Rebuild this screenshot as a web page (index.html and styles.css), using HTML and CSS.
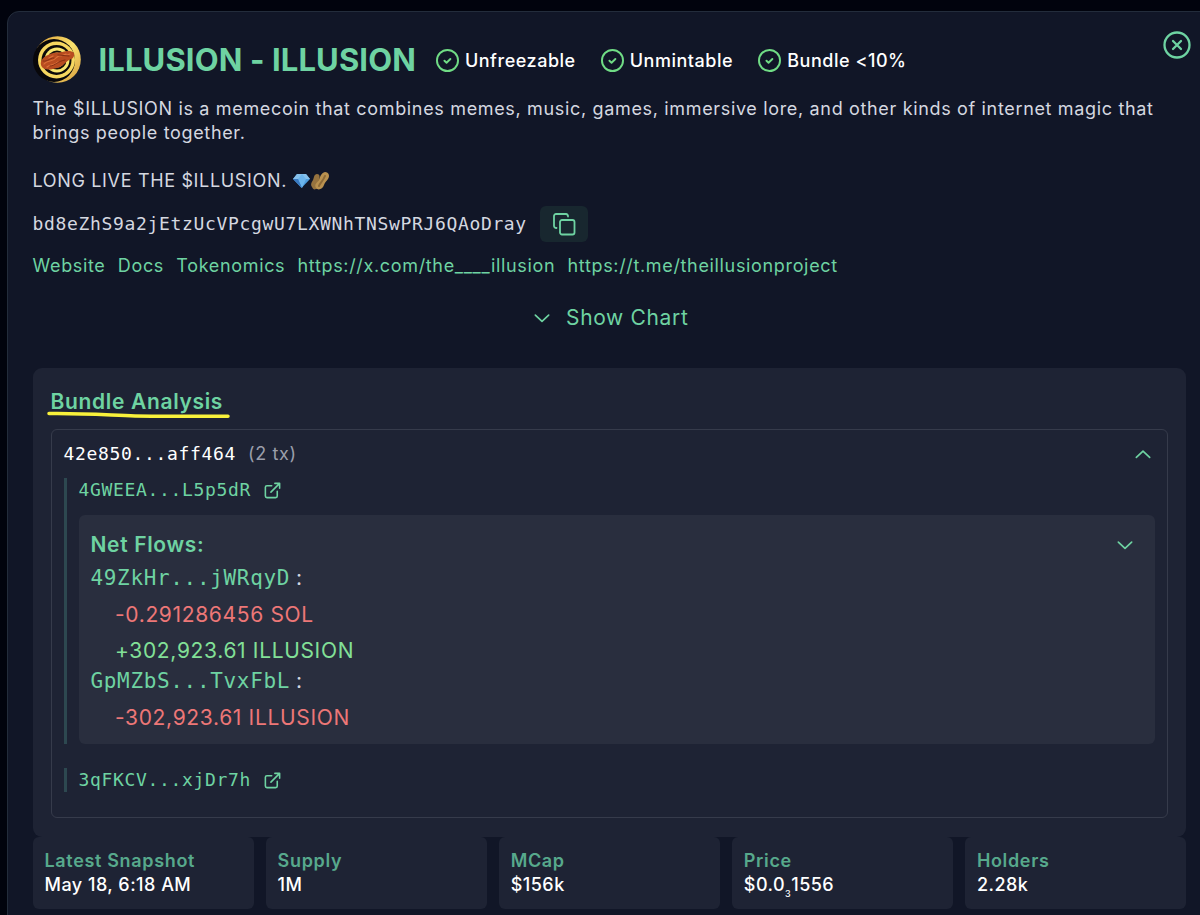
FILE: index.html
```
<!DOCTYPE html>
<html lang="en">

<head>
  <meta charset="UTF-8">
  <meta name="viewport" content="width=device-width, initial-scale=1.0">
  <title>ILLUSION</title>
  <link rel="stylesheet" href="styles.css">
</head>

<body>
  <!-- shared icons -->
  <svg class="sprite">
    <symbol id="check" viewBox="0 0 24 24">
      <circle cx="12" cy="12" r="11"/>
      <path d="M8.8 12.2l2.2 2.1 4-3.9"/>
    </symbol>
    <symbol id="down" viewBox="0 0 24 24"><path d="M4 8.5l8 7.5 8-7.5"/></symbol>
    <symbol id="up" viewBox="0 0 24 24"><path d="M4 16l8-7.5 8 7.5"/></symbol>
    <symbol id="external" viewBox="0 0 24 24">
      <path d="M18 13v6a2 2 0 0 1-2 2H5a2 2 0 0 1-2-2V8a2 2 0 0 1 2-2h6M15 3h6v6M10 14L21 3"/>
    </symbol>
  </svg>

  <div class="modal">
    <button class="close" aria-label="Close">
      <svg viewBox="0 0 28 28"><circle cx="14" cy="14" r="12.5"/><path d="M10 10l8 8M18 10l-8 8"/></svg>
    </button>

    <header class="token">
      <svg class="avatar" viewBox="0 0 48 48">
        <defs>
          <linearGradient id="gold" x1="0" y1="0" x2="1" y2="1">
            <stop offset="0" stop-color="#d99a35"/>
            <stop offset=".5" stop-color="#fbe36d"/>
            <stop offset="1" stop-color="#d59a3c"/>
          </linearGradient>
        </defs>
        <circle cx="24.5" cy="23.5" r="23.3" fill="url(#gold)"/>
        <ellipse cx="21" cy="24.5" rx="21" ry="21.5" fill="#08070a"/>
        <circle cx="23.5" cy="24" r="18.5" fill="#f6d75f"/>
        <circle cx="23.5" cy="24" r="15" fill="#0b090a"/>
        <circle cx="24" cy="24" r="12.5" fill="#f8e66f"/>
        <circle cx="24" cy="24" r="9.5" fill="#14100b"/>
        <circle cx="24" cy="24" r="7.5" fill="#f8e66f"/>
        <path d="M8 29c-1-4 2-8 7-10 5-3 9-2 14-3 4-1 9-2 12 1 1 3-1 6-5 7-4 2-6 7-12 8-6 2-14 3-16-3z" fill="#b84c20"/>
        <path d="M11 28c4-5 8-1 12-6s8-1 14-4M14 31c3-3 7-1 11-5M16 22l4-2M28 20l5-2" fill="none" stroke="#dc7038" stroke-width="1.2"/>
        <path d="M10 25c5 1 6-3 11-3M17 30c5 0 8-5 15-6M25 19l11 1" fill="none" stroke="#842f14" stroke-width="1"/>
      </svg>
      <h1>ILLUSION - ILLUSION</h1>
      <ul class="checks">
        <li><svg><use href="#check"/></svg>Unfreezable</li>
        <li><svg><use href="#check"/></svg>Unmintable</li>
        <li><svg><use href="#check"/></svg>Bundle &lt;10%</li>
      </ul>
    </header>

    <div class="description">
      <p>The $ILLUSION is a memecoin that combines memes, music, games, immersive lore, and other kinds of internet magic that<br>brings people together.</p>
      <p>LONG LIVE THE $ILLUSION.
        <svg class="emoji" viewBox="0 0 38 20">
          <path d="M5 3h9l4 5-8.500 9L1 8z" fill="#4e9ddd"/>
          <path d="M5 3h9l4 5H1z" fill="#86c0ea"/>
          <path d="M6 8l4-5 4 5-4 9z" fill="#6bb4eb"/>
          <path d="M1 8h5l4 9z" fill="#3979c1"/>
          <path d="M20 16c-2-3 0-5 1-7s1-6 4-6 3 3 2 6 0 8-3 9c-2 1-3 0-4-2z" fill="#96733f"/>
          <path d="M24 17c-2-4 1-5 3-8 1-3 2-7 6-8 4 0 5 4 3 7s-3 3-4 6c-1 4-6 6-8 3z" fill="#b9914f"/>
          <path d="M27 15c1-3 4-5 6-10" fill="none" stroke="#8d6a37"/>
        </svg>
      </p>
    </div>

    <div class="address">
      <span class="mono">bd8eZhS9a2jEtzUcVPcgwU7LXWNhTNSwPRJ6QAoDray</span>
      <button class="copy" aria-label="Copy">
        <svg viewBox="0 0 24 24"><rect x="8" y="8" width="14.500" height="14.500" rx="2"/><path d="M4.500 16A2.200 2.200 0 0 1 2 14V4a2 2 0 0 1 2-2h10a2.200 2.200 0 0 1 2 2.500"/></svg>
      </button>
    </div>

    <nav class="links">
      <a>Website</a>
      <a>Docs</a>
      <a>Tokenomics</a>
      <a>https://x.com/the____illusion</a>
      <a>https://t.me/theillusionproject</a>
    </nav>

    <button class="show-chart"><svg><use href="#down"/></svg>Show Chart</button>

    <section class="analysis">
      <h2>Bundle Analysis
        <svg class="marker" viewBox="0 0 184 8"><path d="M2 2.500C35 2 60 4 88 5c32 .6 62 0 93 .3"/></svg>
      </h2>
      <div class="bundle">
        <div class="bundle-head">
          <span class="mono">42e850...aff464</span>
          <span class="count">(2 tx)</span>
          <svg class="chevron"><use href="#up"/></svg>
        </div>
        <div class="tx">
          <a class="mono">4GWEEA...L5p5dR <svg><use href="#external"/></svg></a>
          <div class="flows">
            <h3>Net Flows: <svg class="chevron"><use href="#down"/></svg></h3>
            <div class="wallet"><a class="mono">49ZkHr...jWRqyD</a>:</div>
            <p class="minus">-0.291286456 SOL</p>
            <p class="plus">+302,923.61 ILLUSION</p>
            <div class="wallet"><a class="mono">GpMZbS...TvxFbL</a>:</div>
            <p class="minus">-302,923.61 ILLUSION</p>
          </div>
        </div>
        <div class="tx">
          <a class="mono">3qFKCV...xjDr7h <svg><use href="#external"/></svg></a>
        </div>
      </div>
    </section>

    <dl class="stats">
      <div><dt>Latest Snapshot</dt><dd>May 18, 6:18 AM</dd></div>
      <div><dt>Supply</dt><dd>1M</dd></div>
      <div><dt>MCap</dt><dd>$156k</dd></div>
      <div><dt>Price</dt><dd>$0.0<sub>3</sub>1556</dd></div>
      <div><dt>Holders</dt><dd>2.28k</dd></div>
    </dl>
  </div>
</body>

</html>
```

FILE: styles.css
```
* {
  box-sizing: border-box;
  margin: 0;
  padding: 0;
}
body {
  height: 915px;
  padding: 11px 0 0 7px;
  overflow: hidden;
  background: #01030d;
  color: #d5d8e0;
  font: 18px/24px Inter, sans-serif;
  letter-spacing: 0.66px;
}
svg {
  flex: none;
  fill: none;
  stroke: currentColor;
  stroke-width: 2;
  stroke-linecap: round;
  stroke-linejoin: round;
}
button {
  border: 0;
  background: none;
  color: #6ed3a2;
  font: inherit;
  letter-spacing: inherit;
}
ul {
  list-style: none;
}
a {
  color: #6ed3a2;
}
.sprite {
  display: none;
}
.mono {
  font-family: "DejaVu Sans Mono", monospace;
}
.modal {
  position: relative;
  width: 1205px;
  height: 940px;
  padding: 24px 24.5px;
  border: 1px solid #232c3b;
  border-radius: 12px;
  background: #111627;
}
.close {
  position: absolute;
  top: 19px;
  left: 1155px;
  width: 28px;
  height: 28px;
}
.close svg {
  display: block;
  stroke-width: 2.3;
}

/* token header */
.token {
  display: flex;
  align-items: center;
  height: 48px;
}
.avatar {
  width: 48px;
  height: 48px;
  stroke: none;
}
h1 {
  margin-left: 18px;
  color: #6ed3a2;
  font-size: 31px;
  line-height: 36px;
  letter-spacing: 0.12px;
  white-space: nowrap;
}
.checks {
  display: flex;
  gap: 25px;
  margin: 1px 0 0 20px;
  color: #fff;
  font-weight: 500;
  letter-spacing: 0.53px;
}
.checks li {
  display: flex;
  align-items: center;
  gap: 6px;
}
.checks svg {
  width: 23px;
  height: 23px;
  color: #70dc85;
}
.description {
  margin-top: 13px;
  white-space: nowrap;
}
.description p + p {
  margin-top: 24px;
}
.emoji {
  width: 38px;
  height: 20px;
  margin-left: -1px;
  vertical-align: -4px;
  stroke: none;
}
.address {
  display: flex;
  align-items: center;
  gap: 13px;
  height: 36px;
  margin-top: 12.5px;
}
.copy {
  width: 48px;
  height: 36px;
  border-radius: 6px;
  background: #18272f;
}
.copy svg {
  display: block;
  width: 24px;
  height: 24px;
  margin: auto;
  stroke-width: 1.8;
}
.links {
  display: flex;
  gap: 12.3px;
  margin-top: 12.5px;
}
.show-chart {
  display: flex;
  align-items: center;
  gap: 14px;
  height: 30px;
  margin: 25px auto 0 499.5px;
  font-size: 21px;
}
.show-chart svg {
  width: 20px;
  height: 20px;
}

/* bundle analysis */
.analysis {
  width: 1153.5px;
  height: 469px;
  margin-top: 35px;
  padding: 19px 18px;
  border-radius: 9px;
  background: #1e2334;
}
h2 {
  position: relative;
  color: #6ed3a2;
  font-size: 21px;
  line-height: 30px;
  font-weight: 600;
}
.marker {
  position: absolute;
  top: 23.5px;
  left: -4px;
  width: 184px;
  height: 8px;
  color: #f8f13b;
  stroke-width: 3.5;
}
.bundle {
  height: 389px;
  margin-top: 12px;
  padding: 12px;
  border: 1px solid #363b4b;
  border-radius: 6px;
}
.bundle-head {
  display: flex;
  color: #fff;
}
.count {
  margin-left: 12px;
  color: #9a9eaa;
}
.chevron {
  width: 20px;
  height: 20px;
  margin: 2px 2px 0 auto;
  color: #6ed3a2;
}
.tx {
  margin-bottom: 24px;
  padding-left: 12px;
  border-left: 3px solid #2d4850;
}
.bundle-head + .tx {
  margin-top: 12px;
}
.tx > a {
  display: flex;
  align-items: center;
}
.tx > a svg {
  width: 19px;
  height: 19px;
  margin-left: 12px;
}
.flows {
  height: 229px;
  margin-top: 13px;
  padding: 15px 12px 12px;
  border-radius: 6px;
  background: #292e3e;
  font-size: 21px;
  line-height: 30px;
}
h3 {
  display: flex;
  color: #6ed3a2;
  font-size: 21px;
  font-weight: 600;
}
.flows .chevron {
  margin: 5px 8px 0 auto;
}
.wallet {
  display: flex;
  gap: 6px;
  height: 33px;
  padding-top: 3px;
}
.flows p {
  height: 36px;
  padding: 7px 0 0 24.5px;
}
.flows p + .wallet {
  height: 31px;
  padding-top: 1px;
}
.minus {
  color: #ed7777;
}
.plus {
  color: #82e097;
}

.stats {
  display: grid;
  grid-template-columns: repeat(5, 1fr);
  gap: 12px;
  width: 1153.5px;
}
.stats div {
  height: 72px;
  padding: 12px;
  border-radius: 6px;
  background: #1e2334;
}
dt {
  color: #57a98c;
  font-weight: 600;
}
dd {
  color: #fff;
  font-weight: 500;
  letter-spacing: 0.48px;
}
sub {
  font-size: 9px;
  line-height: 0;
  vertical-align: -6px;
}
```
